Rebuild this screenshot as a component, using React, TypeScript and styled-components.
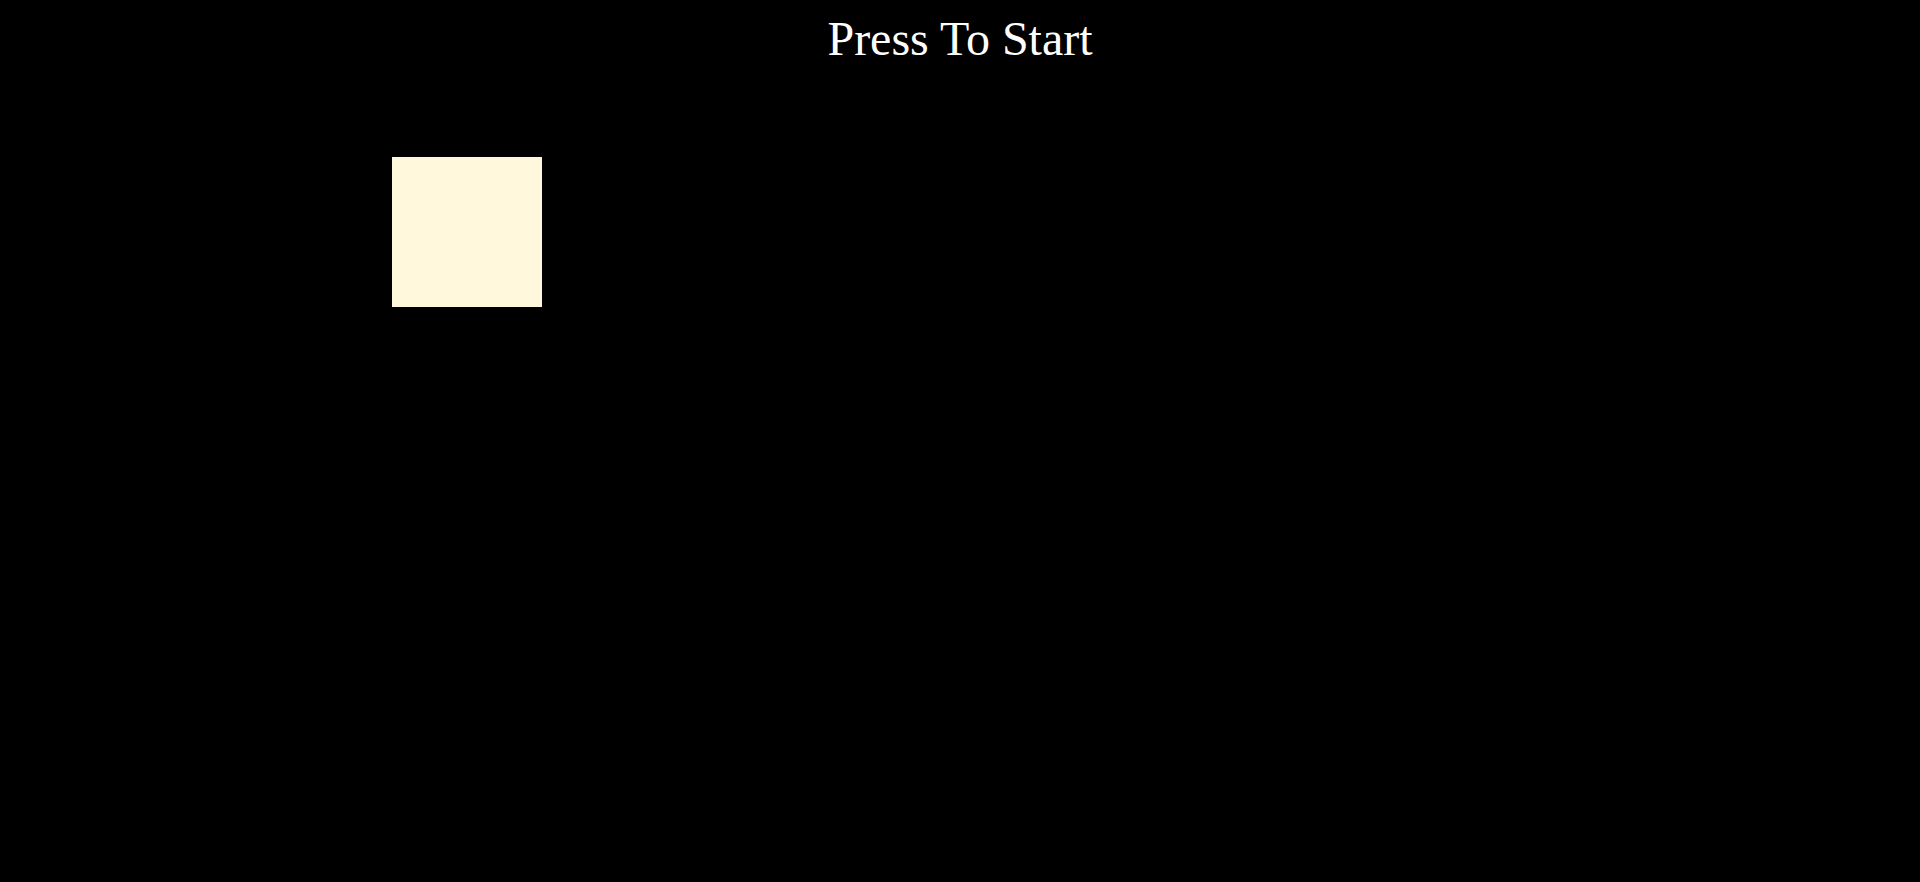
import React from "react";
import styled, { createGlobalStyle } from "styled-components";

const GlobalStyle = createGlobalStyle`
  html, body {
    margin: 0;
    padding: 0;
    background: #000000;
  }
  body {
    font-family: "Liberation Serif", "Times New Roman", serif;
  }
`;

const Screen = styled.main`
  position: relative;
  width: 100vw;
  height: 100vh;
  background: #000000;
  overflow: hidden;
`;

const Title = styled.h1`
  margin: 0;
  padding-top: 11px;
  font-family: "Liberation Serif", "Times New Roman", serif;
  font-size: 48px;
  font-weight: 400;
  line-height: normal;
  color: #ffffff;
  text-align: center;
`;

const Player = styled.div<{ $x: number; $y: number; $size: number }>`
  position: absolute;
  left: ${(p) => p.$x}px;
  top: ${(p) => p.$y}px;
  width: ${(p) => p.$size}px;
  height: ${(p) => p.$size}px;
  background: #fff8dc;
`;

export default function App() {
  return (
    <>
      <GlobalStyle />
      <Screen>
        <Title>Press To Start</Title>
        <Player $x={392} $y={157} $size={150} />
      </Screen>
    </>
  );
}
